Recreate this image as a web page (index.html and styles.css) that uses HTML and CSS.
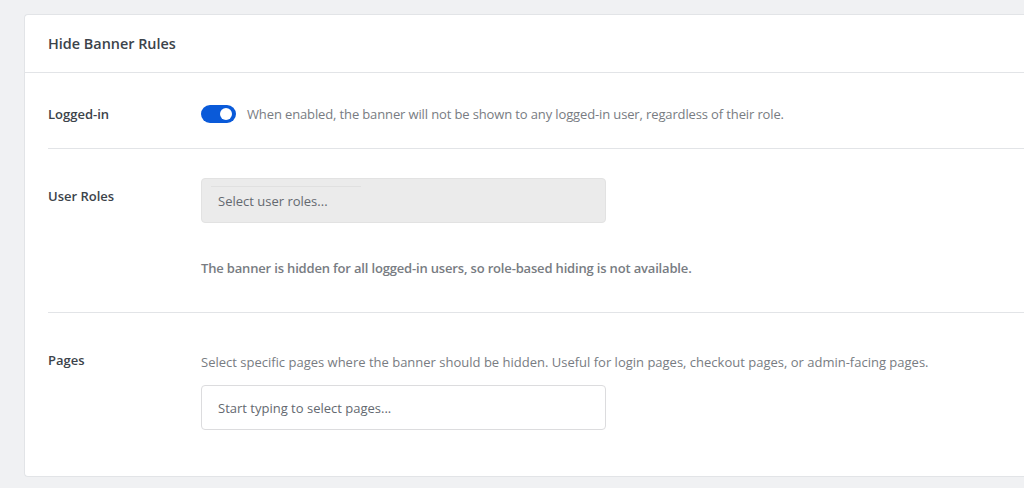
FILE: index.html
```html
<!DOCTYPE html>
<html>
<head>
<meta charset="utf-8">
<link rel="stylesheet" href="styles.css">
</head>
<body>
<div class="page">
  <section class="card">
    <header class="card-header">Hide Banner Rules</header>
    <div class="card-body">
      <div class="row row-login">
        <div class="label">Logged-in</div>
        <div class="control inline">
          <span class="toggle"><span class="knob"></span></span>
          <span class="desc">When enabled, the banner will not be shown to any logged-in user, regardless of their role.</span>
        </div>
      </div>
      <div class="row row-roles">
        <div class="label">User Roles</div>
        <div class="control">
          <div class="select disabled"><span class="inner-line"></span>Select user roles...</div>
          <p class="notice">The banner is hidden for all logged-in users, so role-based hiding is not available.</p>
        </div>
      </div>
      <div class="row row-pages">
        <div class="label">Pages</div>
        <div class="control">
          <p class="desc block">Select specific pages where the banner should be hidden. Useful for login pages, checkout pages, or admin-facing pages.</p>
          <div class="select">Start typing to select pages...</div>
        </div>
      </div>
    </div>
  </section>
</div>
</body>
</html>
```

FILE: styles.css
```css
html, body {
  margin: 0;
  padding: 0;
  background: #f0f1f3;
  font-family: "Open Sans", "Noto Sans", sans-serif;
  color: #3c434a;
  overflow: hidden;
}
.page {
  padding: 14px 0 0 24px;
}
.card {
  background: #fff;
  border: 1px solid #e2e4e7;
  border-right: none;
  border-radius: 4px 0 0 4px;
  width: 1020px;
  box-sizing: border-box;
}
.card-header {
  height: 58px;
  box-sizing: border-box;
  padding: 0 23px;
  display: flex;
  align-items: center;
  font-size: 14.4px;
  font-weight: 600;
  color: #3c434a;
  border-bottom: 1px solid #e2e4e7;
}
.card-body {
  padding: 0 0 0 23px;
}
.row {
  display: flex;
  border-bottom: 1px solid #e2e4e7;
}
.row:last-child {
  border-bottom: none;
}
.label {
  width: 153px;
  flex: none;
  font-size: 13px;
  font-weight: 600;
  color: #3c434a;
}
.row-login {
  height: 69px;
  padding-top: 6px;
  align-items: center;
}
.control.inline {
  display: flex;
  align-items: center;
}
.toggle {
  width: 35px;
  height: 18px;
  border-radius: 9px;
  background: #0a5ad9;
  position: relative;
  flex: none;
  margin-right: 11px;
}
.knob {
  position: absolute;
  width: 12px;
  height: 12px;
  border-radius: 50%;
  background: #fff;
  top: 3px;
  right: 4px;
}
.desc {
  font-size: 13px;
  color: #787c82;
}
.row-login .desc {
  letter-spacing: -0.13px;
}
.row-roles {
  height: 164px;
  box-sizing: border-box;
  padding-top: 29px;
}
.row-roles .label {
  padding-top: 9px;
}
.select {
  width: 405px;
  height: 45px;
  box-sizing: border-box;
  border: 1px solid #dcdcde;
  border-radius: 4px;
  display: flex;
  align-items: center;
  padding-left: 16px;
  font-size: 13px;
  color: #646970;
  background: #fff;
  position: relative;
}
.select.disabled {
  background: #ebebeb;
  border-color: #e2e2e2;
}
.inner-line {
  position: absolute;
  top: 7px;
  left: 9px;
  width: 150px;
  height: 1px;
  background: #e0e0e0;
}
.notice {
  margin: 36px 0 0;
  font-size: 13px;
  font-weight: 600;
  color: #787c82;
  letter-spacing: -0.17px;
}
.row-pages {
  height: 163px;
  box-sizing: border-box;
  padding-top: 40px;
}
.row-pages .label {
  margin-top: -2px;
}
.desc.block {
  margin: 0 0 14px;
}
```
